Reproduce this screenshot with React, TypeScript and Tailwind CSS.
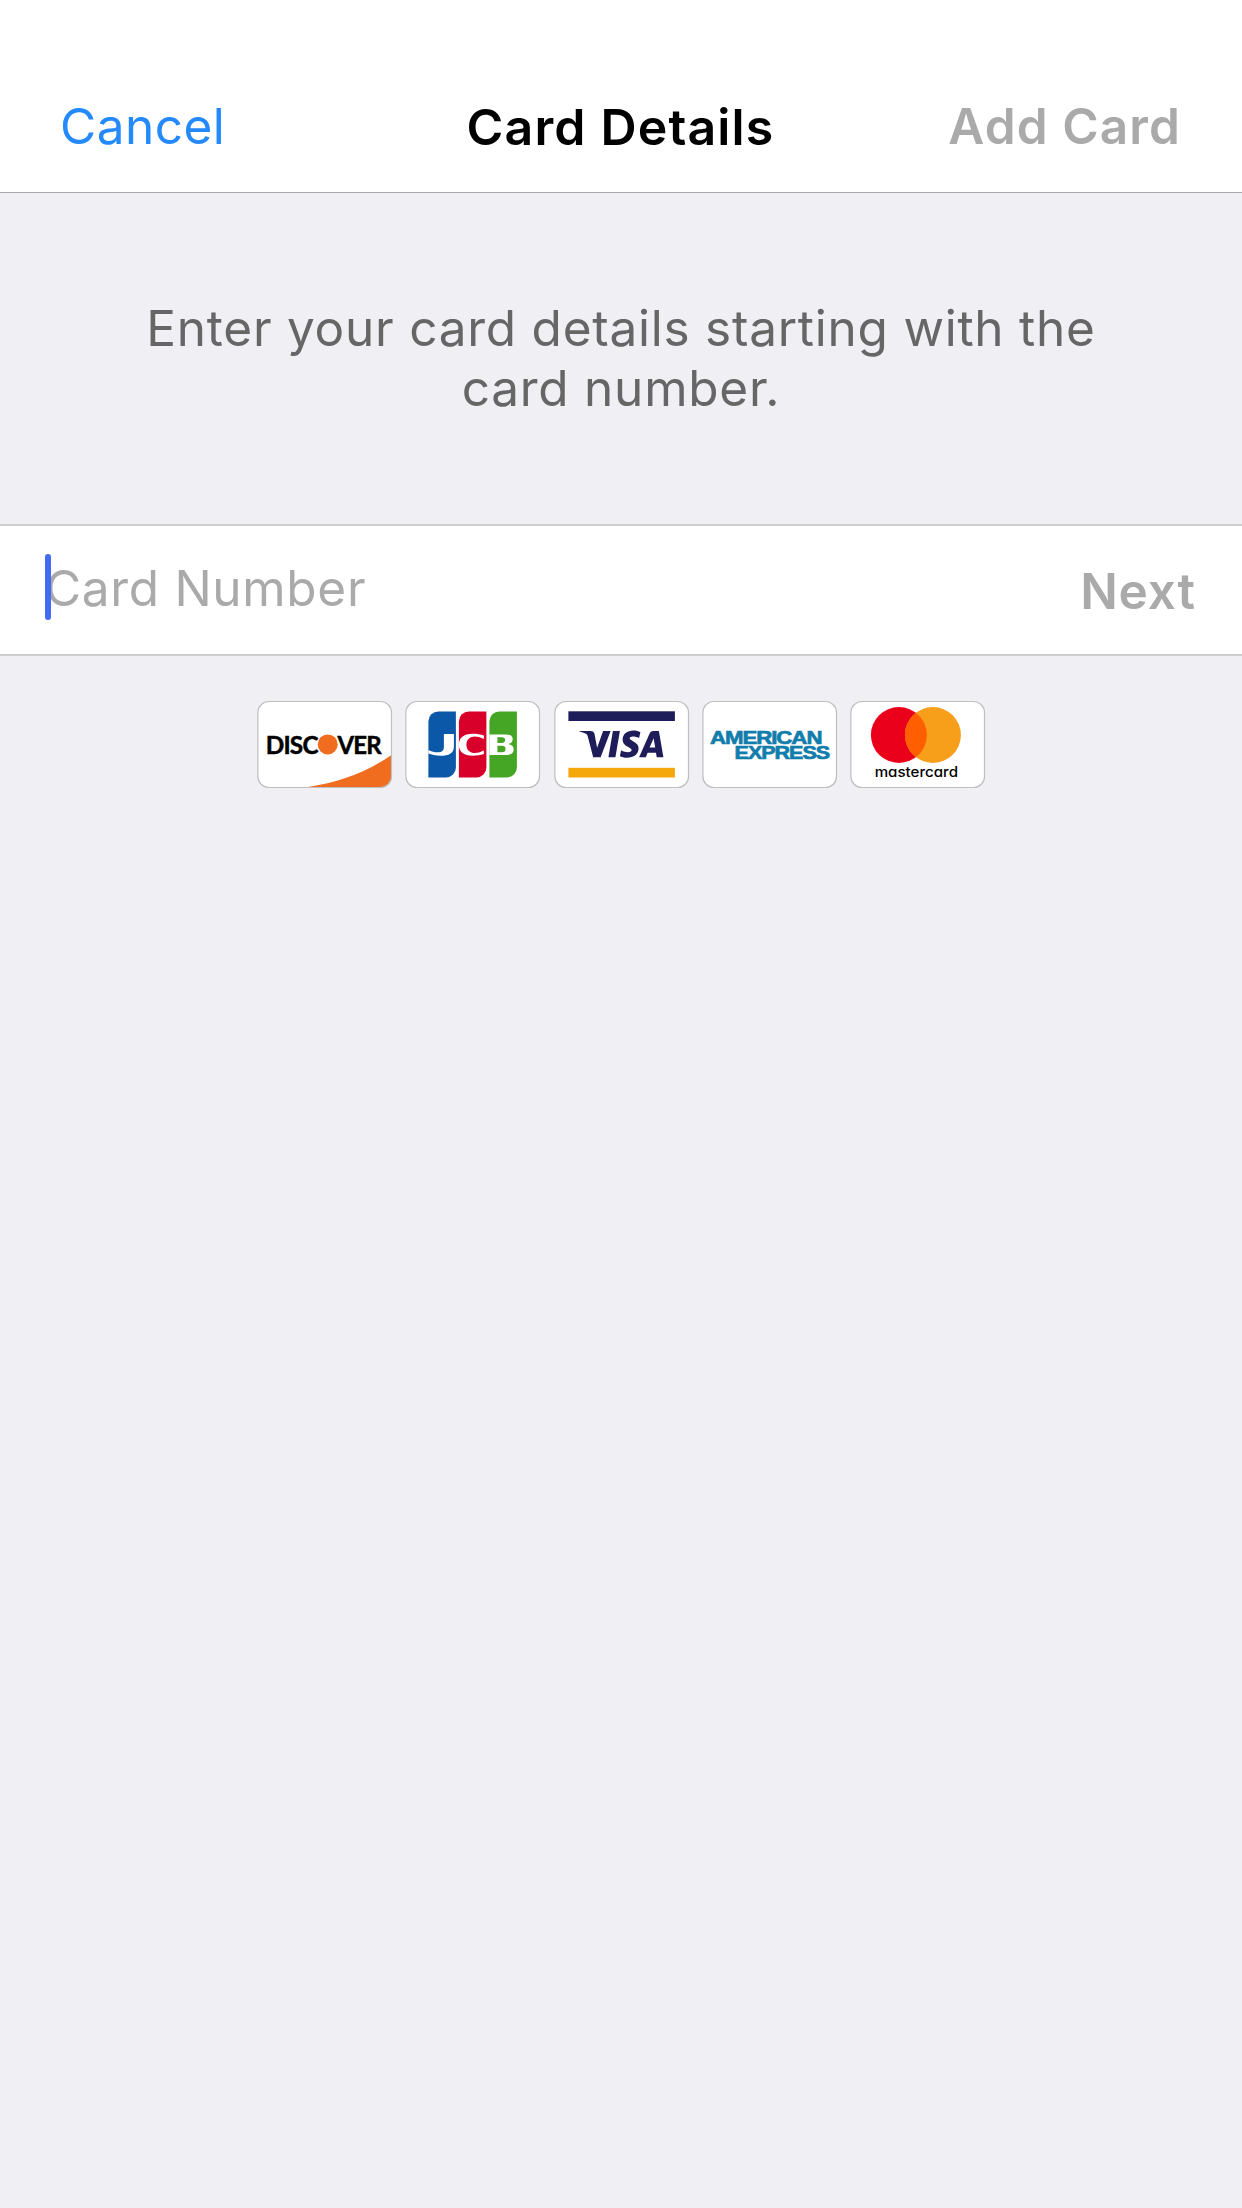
import type { ReactNode } from "react";

function CardFrame({ label, children }: { label: string; children: ReactNode }) {
  return (
    <div className="h-[87px] w-[135px] shrink-0">
      <svg role="img" aria-label={label} viewBox="-0.4 0 135 87" className="block h-full w-full overflow-visible">
        <rect x="0.5" y="0.5" width="133.6" height="86" rx="11" fill="#fff" />
        {children}
        <rect x="0.5" y="0.5" width="133.6" height="86" rx="11" fill="none" stroke="#bfbfc1" strokeWidth="1.2" />
      </svg>
    </div>
  );
}

function Discover() {
  return (
    <CardFrame label="Discover">
      <path d="M48 86.5 C82 81 108 72 134.1 54 V75.5 A11 11 0 0 1 123.100 86.500 Z" fill="#f06d1f" />
      <g fontFamily="Lato" fontWeight="700" fontSize="25" fill="#000" stroke="#000" strokeWidth="0.500">
        <text x="8.300" y="52.600" letterSpacing="-0.800" textLength="52" lengthAdjust="spacingAndGlyphs">DISC</text>
        <text x="80" y="52.600" letterSpacing="-0.800" textLength="43.500" lengthAdjust="spacingAndGlyphs">VER</text>
      </g>
      <circle cx="70.300" cy="43.400" r="10" fill="#f06d1f" />
    </CardFrame>
  );
}

function Jcb() {
  return (
    <CardFrame label="JCB">
      <g transform="translate(0 0.400)">
        <path d="M33 10H50.500V66A10 10 0 0 1 40.500 76H23V20A10 10 0 0 1 33 10Z" fill="#0b57a8" />
        <path d="M63.500 10H81V66A10 10 0 0 1 71 76H53.500V20A10 10 0 0 1 63.500 10Z" fill="#d8002b" />
        <path d="M94 10H111.500V66A10 10 0 0 1 101.500 76H84V20A10 10 0 0 1 94 10Z" fill="#45a626" />
        <path d="M38.500 32.700H48.500V45C48.500 52 43 54.300 35.500 54.300C30 54.300 26 53.200 23 52V48.500C26 49.800 29 50.900 32.500 50.900C36.500 50.900 38.500 49 38.500 45.500Z" fill="#fff" />
        <path d="M78.500 34V37.500C75 35.800 72 35 69.500 35C64.500 35 61 38 61 43.300C61 48.500 64.500 51.600 69.500 51.600C72 51.600 75 50.800 78.500 49.100V52.600C75 53.800 71.500 54.300 67.500 54.300C58 54.300 53.500 50 53.500 43.300C53.500 36.700 58 32.300 67.500 32.300C71.500 32.300 75 32.800 78.500 34Z" fill="#fff" />
        <path fillRule="evenodd" d="M84 33H100.500C105 33 107.300 34.800 107.300 37.800C107.300 40.500 105.500 42 102.500 42.700C106.300 43.200 108.300 45 108.300 48C108.300 51.500 105.500 53.600 100.500 53.600H84ZM92 35.800V41.500H96.500C98.700 41.500 99.700 40.300 99.700 38.600C99.700 36.800 98.600 35.800 96.500 35.800ZM92 44.300V50.800H96.500C98.900 50.800 100.200 49.500 100.200 47.500C100.200 45.500 98.900 44.300 96.500 44.300Z" fill="#fff" />
      </g>
    </CardFrame>
  );
}

function Visa() {
  return (
    <CardFrame label="Visa">
      <rect x="14" y="10.300" width="106.500" height="9.700" fill="#1f1c5a" />
      <rect x="14" y="66.800" width="106.500" height="9.700" fill="#f5a80b" />
      <g fill="#1f1c5a">
        <path d="M25 30.400L25.200 30H36C38.500 30 39.700 30.900 40.100 33L42.700 46.700L48.700 30H56.200L46.200 56.300H38.800L33.500 36C33 34 32.500 33.300 31 32.600C29.500 31.800 27.500 31 25 30.400Z" />
        <path d="M58.500 30H65.500L61 56.300H54Z" />
        <path d="M86 31.300L84.700 37C82.500 36 80.500 35.500 78.500 35.500C76.500 35.500 75.300 36.200 75.300 37.300C75.300 38.500 76.800 39.200 79 40.500C82.500 42.300 84.200 44.500 84.200 47.300C84.200 53.200 79.500 56.800 72.500 56.800C69.800 56.800 67 56.200 65.500 55.300L66.700 49.300C69.200 50.700 71.200 51.200 73.500 51.200C75.800 51.200 77.200 50.400 77.200 49C77.200 47.700 75.800 47 73.700 45.900C69.800 43.900 68.200 41.600 68.200 38.700C68.200 33.300 72.700 29.600 79 29.600C81.600 29.600 84.200 30.200 86 31.300Z" />
        <path fillRule="evenodd" d="M84.700 56.300L95.200 32.500C96 30.800 97.200 30 99 30H104.500L109 56.300H102.300L101.600 51.800H93.200L91.500 56.300ZM95.200 46.500H100.800L99.200 37.300Z" />
      </g>
    </CardFrame>
  );
}

function Amex() {
  return (
    <CardFrame label="American Express">
      <g fontFamily="Liberation Sans" fontWeight="700" fontSize="19" fill="#117dab" stroke="#117dab" strokeWidth="0.700" letterSpacing="-0.900">
        <text x="7.500" y="42.500" textLength="111.500" lengthAdjust="spacingAndGlyphs">AMERICAN</text>
        <text x="32.200" y="57.900" textLength="94.500" lengthAdjust="spacingAndGlyphs">EXPRESS</text>
      </g>
    </CardFrame>
  );
}

function Mastercard() {
  return (
    <CardFrame label="Mastercard">
      <circle cx="48.500" cy="34" r="28" fill="#eb001b" />
      <circle cx="82.500" cy="34" r="28" fill="#f79e1b" />
      <path d="M65.500 11.750A28 28 0 0 1 65.500 56.250A28 28 0 0 1 65.500 11.750Z" fill="#ff5f00" />
      <text x="24.300" y="76.400" textLength="83.300" lengthAdjust="spacingAndGlyphs" fontFamily="Inter" fontWeight="500" fontSize="14" fill="#000" className="[font-feature-settings:'cv11']" letterSpacing="0">
        mastercard
      </text>
    </CardFrame>
  );
}

export default function App() {
  return (
    <div className="flex min-h-[2208px] w-[1242px] flex-col bg-[#efeff4] font-['Inter',sans-serif] text-[49.5px] leading-[60px] tracking-[0.5px]">
      <header className="grid h-[193px] grid-cols-[1fr_auto_1fr] items-start border-b border-[#a7a6ab] bg-white pt-24 pr-[61px] pl-[60px]">
        <button className="justify-self-start text-[#2489fb]">Cancel</button>
        <h1 className="pt-px text-[50px] font-semibold tracking-[1.15px] text-black">Card Details</h1>
        <button className="justify-self-end font-semibold tracking-[1.1px] text-[#aaaaaa]">Add Card</button>
      </header>

      <p className="mt-[105px] h-[226px] text-center tracking-[0.76px] text-[#666666]">
        Enter your card details starting with the
        <br />
        card number.
      </p>

      <section className="flex h-[132px] items-start justify-between border-y-2 border-[#cdcdcf] bg-white pr-[46px] pl-[45px]">
        <div className="relative pt-8">
          <span className="tracking-[0.68px] text-[#aaaaaa]">Card Number</span>
          <span className="absolute top-7 left-0 h-[66px] w-1.5 rounded-full bg-[#4469f2]" />
        </div>
        <button className="pt-[35px] font-semibold tracking-[0.9px] text-[#aaaaaa]">Next</button>
      </section>

      <div className="mt-[45px] flex justify-center gap-[13.2px]">
        <Discover />
        <Jcb />
        <Visa />
        <Amex />
        <Mastercard />
      </div>
    </div>
  );
}
